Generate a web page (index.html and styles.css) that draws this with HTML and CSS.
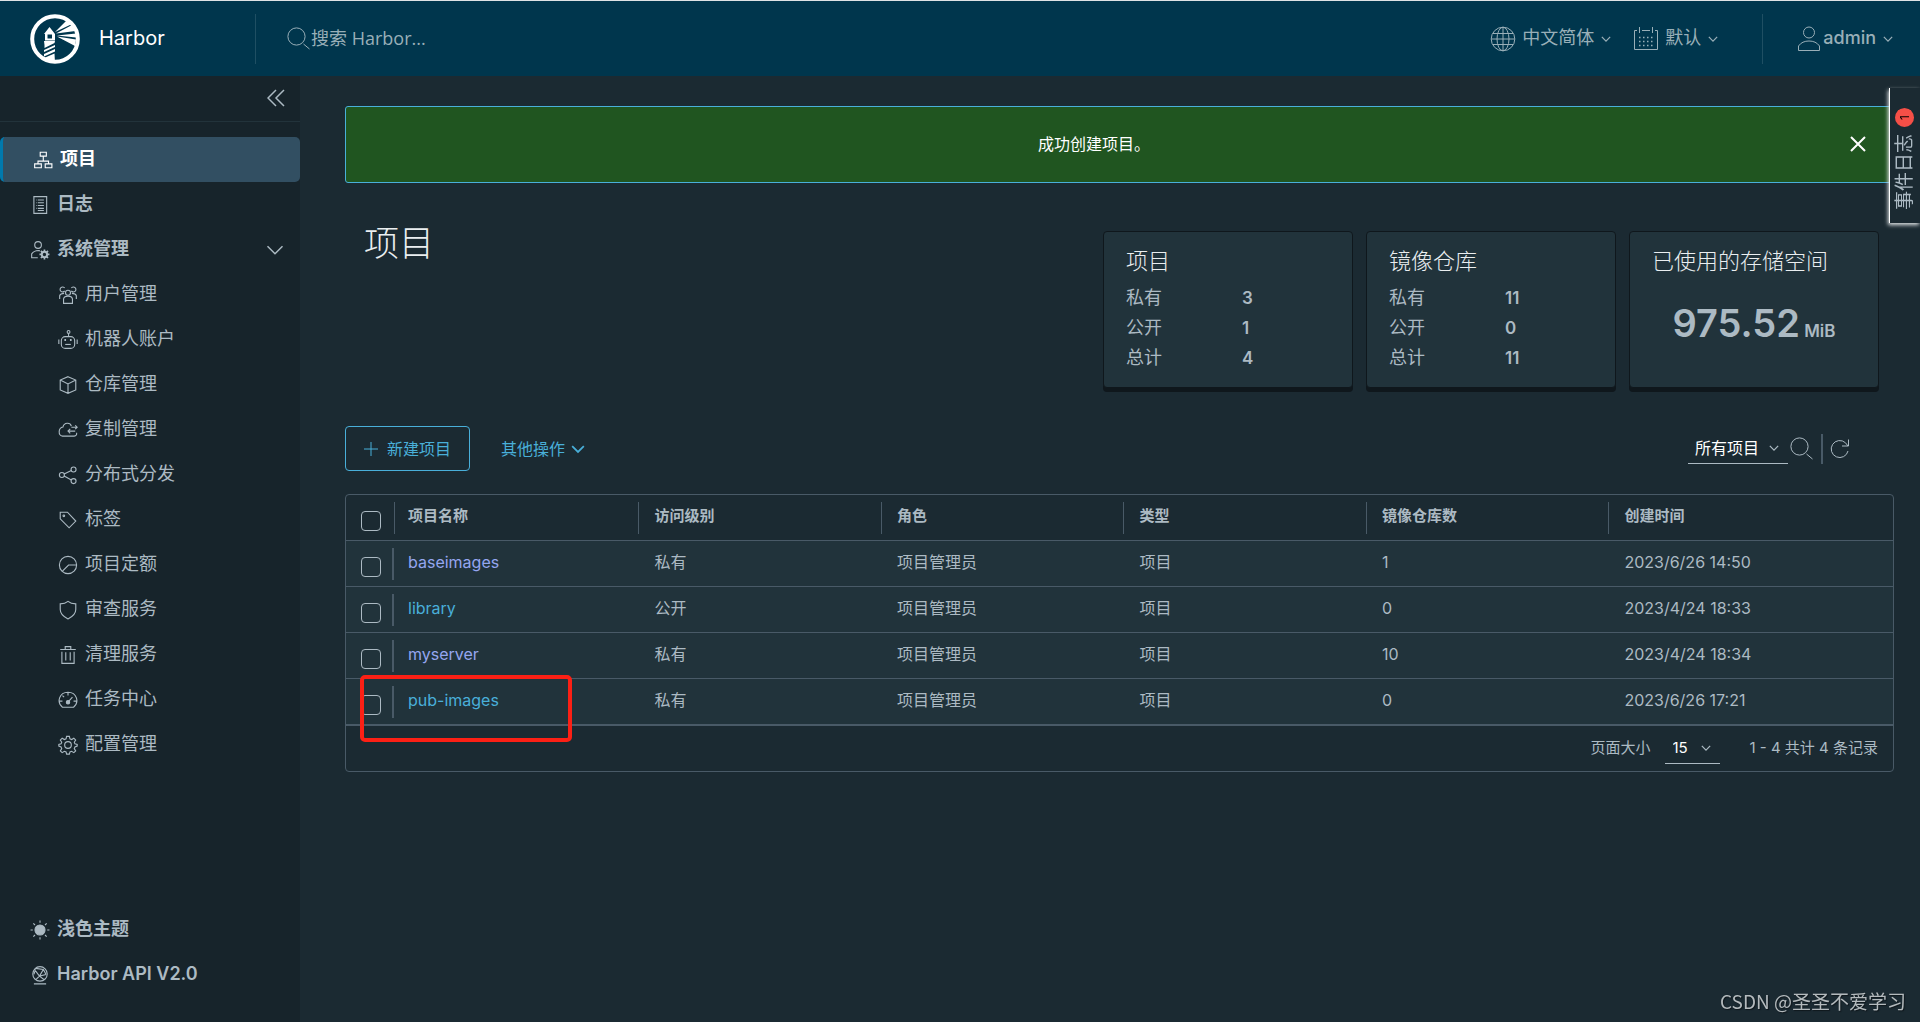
FILE: index.html
```html
<!DOCTYPE html>
<html lang="zh-CN">
<head>
<meta charset="utf-8">
<meta name="viewport" content="width=device-width, initial-scale=1">
<title>Harbor</title>
<link rel="stylesheet" href="styles.css">
</head>
<body>
<svg class="sprite" aria-hidden="true">
  <symbol id="i-chevron" viewBox="0 0 24 24"><path d="M2 7l10 10L22 7"/></symbol>
  <symbol id="i-search" viewBox="0 0 24 24"><circle cx="9.500" cy="9.500" r="8.600"/><path d="M16.500 17l6 5"/></symbol>
  <symbol id="i-globe" viewBox="0 0 26 26"><circle cx="13" cy="13" r="11.800"/><ellipse cx="13" cy="13" rx="6" ry="11.800"/><path d="M13 1v24M1.500 13h23M3 7.500h20M3 18.500h20"/></symbol>
  <symbol id="i-calendar" viewBox="0 0 26 26"><path d="M4 4.500H1.500v19h23v-19H22M9 4.500h8M6.500 1v6M19.500 1v6"/><path stroke-dasharray="1.500 2.500" stroke-width="1.500" d="M6 11.500h15M6 15.500h15M6 19.500h15"/></symbol>
  <symbol id="i-user" viewBox="0 0 24 26"><circle cx="12" cy="6.500" r="5.500"/><path d="M1.500 24.500v-4.500c2.500-3.500 6-5 10.500-5s8 1.500 10.500 5v4.500z"/></symbol>
  <symbol id="i-collapse" viewBox="0 0 36 36"><path d="M18 2L2 18l16 16M34 2L18 18l16 16"/></symbol>
  <symbol id="i-projects" viewBox="0 0 36 36"><path d="M13 4h11v7H13zM3 25h12v7H3zM22 25h12v7H22zM18.500 11v7M9 25v-5h19v5M18.500 18v2"/></symbol>
  <symbol id="i-logs" viewBox="0 0 36 36"><path d="M7 3h23v30H7zM14 9h11M14 14h11M14 19h11M14 24h11M14 28h11M11 9h1M11 14h1M11 19h1M11 24h1"/></symbol>
  <symbol id="i-admin" viewBox="0 0 36 36"><circle cx="14.500" cy="9" r="6"/><path d="M14 32H3v-7c3-4 7-6 12-6l3 .5"/><circle cx="26" cy="26" r="4.800" stroke-width="3.500"/><path stroke-width="3" d="M26 17v4M26 31v4M17 26h4M31 26h4M19.600 19.600l3 3M29.400 29.400l3 3M32.400 19.600l-3 3M22.600 29.400l-3 3"/></symbol>
  <symbol id="i-users" viewBox="0 0 36 36"><circle cx="18" cy="14" r="4.500"/><path d="M10 33v-8c1-4 4-5 8-5s7 1 8 5v8z"/><path d="M12 10.500a4.500 4.500 0 1 1 0-5M24 10.500a4.500 4.500 0 1 0 0-5M3 25v-6c1-3 4-4 8-4M33 25v-6c-1-3-4-4-8-4"/></symbol>
  <symbol id="i-robot" viewBox="0 0 36 36"><rect x="6" y="12" width="24" height="21" rx="7"/><circle cx="19" cy="3.500" r="2.500"/><path d="M19 6v6M1.500 17v8M34.500 17v8"/><path stroke-width="3" d="M13 16v4M23 16v4"/><path d="M13 26h10"/></symbol>
  <symbol id="i-box" viewBox="0 0 36 36"><path d="M18 3l14 6v18l-14 6-14-6V9zM4 9l14 7 14-7M18 16v17"/></symbol>
  <symbol id="i-cloud" viewBox="0 0 36 36"><path d="M24 11C22 4 11 4 9 12.500 0 14 0 28 8 29h21c4-.5 5-3 4.500-6M24 13h10M31 9.500l3.500 3.500-3.500 3.500M31 20H18M22 16l-4 4 4 4"/></symbol>
  <symbol id="i-share" viewBox="0 0 36 36"><circle cx="7" cy="18" r="4.500"/><circle cx="28" cy="8" r="4.500"/><circle cx="28" cy="29" r="4.500"/><path d="M11 16l13-6M11 20l13 7"/></symbol>
  <symbol id="i-tag" viewBox="0 0 36 36"><path d="M4 4h13l15 16-12 12L4 16z"/><circle cx="10.500" cy="10.500" r="1.500"/></symbol>
  <symbol id="i-quota" viewBox="0 0 36 36"><circle cx="18" cy="18" r="15.500"/><path d="M33 18H19L8 29"/></symbol>
  <symbol id="i-shield" viewBox="0 0 36 36"><path d="M18 2.500c4 3.500 9 4.500 14 4.500v10c0 8-6 13-14 17C10 30 4 25 4 17V7c5 0 10-1 14-4.500z"/></symbol>
  <symbol id="i-trash" viewBox="0 0 36 36"><path d="M4 8h28M7 12v21h22V12M13 8V3h10v5M14 13v15M22 13v15"/></symbol>
  <symbol id="i-gauge" viewBox="0 0 36 36"><path d="M8 31C-3 22 2 4 18 4s21 18 10 27zM18 5v5M3 20h5M28 20h5M8 10l3 3"/><circle cx="18" cy="22" r="3" fill="currentColor"/><path d="M18 22l8-9"/></symbol>
  <symbol id="i-gear" viewBox="0 0 36 36"><circle cx="18" cy="18" r="6"/><path d="M15.500 2.500h5l1 4.500 3 1.200 4-2.500 3.300 3.300-2.500 4 1.200 3 4 1v3l-4 1.500-1.200 3 2.500 4-3.300 3.300-4-2.500-3 1.200-1 4h-5l-1-4-3-1.200-4 2.500-3.300-3.300 2.500-4-1.200-3-4-1.500v-3l4-1 1.200-3-2.500-4 3.300-3.300 4 2.500 3-1.200z"/></symbol>
  <symbol id="i-sun" viewBox="0 0 36 36"><circle cx="18" cy="18" r="9" fill="currentColor"/><path d="M18 1v4M18 31v4M1 18h4M31 18h4M6 6l3 3M27 27l3 3M30 6l-3 3M9 27l-3 3"/></symbol>
  <symbol id="i-api" viewBox="0 0 36 36"><circle cx="18" cy="16" r="13"/><path d="M8 8l9 12 12-3M17 20l-6 6M17 20l8 6M10 6l14 2 5 9M7 17l3-9M24 8l-7 12M7 34h22"/></symbol>
  <symbol id="i-plus" viewBox="0 0 14 14"><path d="M7 0v14M0 7h14"/></symbol>
  <symbol id="i-close" viewBox="0 0 16 16"><path d="M1 1l14 14M15 1L1 15"/></symbol>
  <symbol id="i-refresh" viewBox="0 0 20 22"><path d="M18 13a8.500 8.500 0 1 1-2.500-8.200L18 8M18.500 1.500V8H12"/></symbol>
</svg>

<header class="header">
  <a class="brand" href="#">
    <svg class="logo" viewBox="0 0 50 50" aria-hidden="true">
      <circle class="logo-ring" cx="25" cy="25" r="22.800"/>
      <path d="M14 20l5.500-7 5.500 7v6.500H15V20zM14 27h11l-.5 2-10 5v-3zM14 36l11-5v2l-11 5zM14 40l11-5v2.500l-11 5zM14 44l10.500-4.500L25 49l-11-3zM25 18L37 6l5 4zM26 19.500L42 11l3.500 6zM27 21.500L46 19.500v4zM27 22.500L46 25.500 45 32z"/>
      <path class="logo-window" d="M17.500 20.500h4.500v4h-4.500z"/>
    </svg>
    <span>Harbor</span>
  </a>
  <label class="search">
    <svg class="icon search-icon" aria-hidden="true"><use href="#i-search"/></svg>
    <input type="search" placeholder="搜索 Harbor..." aria-label="搜索 Harbor">
  </label>
  <div class="header-actions">
    <button type="button" class="menu"><svg class="icon menu-icon"><use href="#i-globe"/></svg><span>中文简体</span><svg class="icon caret"><use href="#i-chevron"/></svg></button>
    <button type="button" class="menu"><svg class="icon menu-icon"><use href="#i-calendar"/></svg><span>默认</span><svg class="icon caret"><use href="#i-chevron"/></svg></button>
  </div>
  <div class="account">
    <button type="button" class="menu menu-user"><svg class="icon menu-icon"><use href="#i-user"/></svg><span>admin</span><svg class="icon caret"><use href="#i-chevron"/></svg></button>
  </div>
</header>

<div class="layout">
  <aside class="sidebar">
    <div class="sidebar-top"><button type="button" class="collapse" aria-label="收起"><svg class="icon"><use href="#i-collapse"/></svg></button></div>
    <nav class="nav">
      <a class="nav-item active" href="#"><svg class="icon"><use href="#i-projects"/></svg><span>项目</span></a>
      <a class="nav-item" href="#"><svg class="icon"><use href="#i-logs"/></svg><span>日志</span></a>
      <button type="button" class="nav-item"><svg class="icon"><use href="#i-admin"/></svg><span>系统管理</span><svg class="icon group-caret"><use href="#i-chevron"/></svg></button>
      <a class="nav-item sub" href="#"><svg class="icon"><use href="#i-users"/></svg><span>用户管理</span></a>
      <a class="nav-item sub" href="#"><svg class="icon"><use href="#i-robot"/></svg><span>机器人账户</span></a>
      <a class="nav-item sub" href="#"><svg class="icon"><use href="#i-box"/></svg><span>仓库管理</span></a>
      <a class="nav-item sub" href="#"><svg class="icon"><use href="#i-cloud"/></svg><span>复制管理</span></a>
      <a class="nav-item sub" href="#"><svg class="icon"><use href="#i-share"/></svg><span>分布式分发</span></a>
      <a class="nav-item sub" href="#"><svg class="icon"><use href="#i-tag"/></svg><span>标签</span></a>
      <a class="nav-item sub" href="#"><svg class="icon"><use href="#i-quota"/></svg><span>项目定额</span></a>
      <a class="nav-item sub" href="#"><svg class="icon"><use href="#i-shield"/></svg><span>审查服务</span></a>
      <a class="nav-item sub" href="#"><svg class="icon"><use href="#i-trash"/></svg><span>清理服务</span></a>
      <a class="nav-item sub" href="#"><svg class="icon"><use href="#i-gauge"/></svg><span>任务中心</span></a>
      <a class="nav-item sub" href="#"><svg class="icon"><use href="#i-gear"/></svg><span>配置管理</span></a>
    </nav>
    <div class="nav nav-bottom">
      <button type="button" class="nav-item"><svg class="icon"><use href="#i-sun"/></svg><span>浅色主题</span></button>
      <a class="nav-item" href="#"><svg class="icon"><use href="#i-api"/></svg><span>Harbor API V2.0</span></a>
    </div>
  </aside>

  <main class="content">
    <div class="alert" role="status">
      <p>成功创建项目。</p>
      <button type="button" class="alert-close" aria-label="关闭"><svg class="icon"><use href="#i-close"/></svg></button>
    </div>

    <div class="summary">
      <h1>项目</h1>
      <div class="cards">
        <section class="card">
          <h2>项目</h2>
          <dl><dt>私有</dt><dd>3</dd><dt>公开</dt><dd>1</dd><dt>总计</dt><dd>4</dd></dl>
        </section>
        <section class="card">
          <h2>镜像仓库</h2>
          <dl><dt>私有</dt><dd>11</dd><dt>公开</dt><dd>0</dd><dt>总计</dt><dd>11</dd></dl>
        </section>
        <section class="card">
          <h2>已使用的存储空间</h2>
          <p class="storage"><strong>975.52</strong> <span>MiB</span></p>
        </section>
      </div>
    </div>

    <div class="toolbar">
      <button type="button" class="btn btn-outline"><svg class="icon"><use href="#i-plus"/></svg><span>新建项目</span></button>
      <button type="button" class="btn btn-link"><span>其他操作</span><svg class="icon"><use href="#i-chevron"/></svg></button>
      <div class="filters">
        <span class="select select-filter">
          <select aria-label="项目筛选"><option>所有项目</option></select>
          <svg class="icon caret"><use href="#i-chevron"/></svg>
        </span>
        <button type="button" class="tool" aria-label="搜索"><svg class="icon search-icon"><use href="#i-search"/></svg></button>
        <button type="button" class="tool tool-refresh" aria-label="刷新"><svg class="icon"><use href="#i-refresh"/></svg></button>
      </div>
    </div>

    <div class="datagrid">
      <table>
        <colgroup><col class="col-check"><col><col><col><col><col><col><col class="col-end"></colgroup>
        <thead>
          <tr><th scope="col"><input type="checkbox" aria-label="全选"></th><th scope="col">项目名称</th><th scope="col">访问级别</th><th scope="col">角色</th><th scope="col">类型</th><th scope="col">镜像仓库数</th><th scope="col" colspan="2">创建时间</th></tr>
        </thead>
        <tbody>
          <tr><td><input type="checkbox" aria-label="baseimages"></td><td><a class="visited" href="#">baseimages</a></td><td>私有</td><td>项目管理员</td><td>项目</td><td>1</td><td colspan="2">2023/6/26 14:50</td></tr>
          <tr><td><input type="checkbox" aria-label="library"></td><td><a href="#">library</a></td><td>公开</td><td>项目管理员</td><td>项目</td><td>0</td><td colspan="2">2023/4/24 18:33</td></tr>
          <tr><td><input type="checkbox" aria-label="myserver"></td><td><a class="visited" href="#">myserver</a></td><td>私有</td><td>项目管理员</td><td>项目</td><td>10</td><td colspan="2">2023/4/24 18:34</td></tr>
          <tr><td><input type="checkbox" aria-label="pub-images"></td><td><a href="#">pub-images</a></td><td>私有</td><td>项目管理员</td><td>项目</td><td>0</td><td colspan="2">2023/6/26 17:21</td></tr>
        </tbody>
      </table>
      <div class="pager">
        <label for="page-size">页面大小</label>
        <span class="select select-size">
          <select id="page-size"><option>15</option></select>
          <svg class="icon caret"><use href="#i-chevron"/></svg>
        </span>
        <span>1 - 4 共计 4 条记录</span>
      </div>
      <div class="highlight"></div>
    </div>
  </main>
</div>

<button type="button" class="event-tab"><span>事件日志</span><span class="badge">1</span></button>
<div class="watermark">CSDN @圣圣不爱学习</div>
</body>
</html>
```
FILE: styles.css
```css
* {
  box-sizing: border-box;
}

body {
  margin: 0;
  min-height: 100vh;
  display: flex;
  flex-direction: column;
  background: #1b2a32;
  color: #acbac3;
  font-family: Inter, "Noto Sans CJK SC", sans-serif;
  font-size: 16px;
  line-height: 24px;
}

button,
input,
select {
  font: inherit;
  color: inherit;
  background: none;
  border: 0;
  margin: 0;
  padding: 0;
}

a {
  color: inherit;
  text-decoration: none;
}

h1,
h2,
p,
dl,
dd {
  margin: 0;
}

.sprite {
  position: absolute;
  width: 0;
  height: 0;
}

.icon {
  display: block;
  flex: none;
  width: 20px;
  height: 20px;
  fill: none;
  stroke: currentColor;
  stroke-width: 2;
}

/* Header */
.header {
  display: flex;
  align-items: center;
  height: 76px;
  border-top: 1px solid #dfe3e5;
  background: #00364d;
  color: #99afb8;
  font-size: 18px;
}

.brand {
  display: flex;
  align-items: center;
  gap: 19px;
  width: 256px;
  height: 50px;
  padding-left: 30px;
  border-right: 1px solid #1f4f63;
  color: #fff;
  font-size: 20px;
}

.brand span,
.menu span {
  padding-bottom: 2px;
}

.logo {
  width: 50px;
  height: 50px;
  fill: #fff;
}

.logo-ring {
  fill: none;
  stroke: #fff;
  stroke-width: 4;
}

.logo-window {
  fill: #00364d;
}

.search {
  flex: 1;
  display: flex;
  align-items: center;
  padding-left: 31px;
}

.search-icon {
  width: 24px;
  height: 24px;
  stroke-width: 1;
}

.search input {
  flex: 1;
  outline: 0;
  padding-bottom: 2px;
  font-family: "Open Sans", "Noto Sans CJK SC", sans-serif;
}

.search input::placeholder {
  color: #99afb8;
  opacity: 1;
}

.header-actions {
  display: flex;
  gap: 22px;
  padding-right: 44px;
}

.account {
  display: flex;
  align-items: center;
  height: 50px;
  padding: 0 27px 0 34px;
  border-left: 1px solid #1f4f63;
}

.menu {
  display: flex;
  align-items: center;
}

.menu-icon {
  width: 26px;
  height: 26px;
  margin-right: 6px;
  stroke-width: 1;
}

.menu-user .menu-icon {
  width: 24px;
  margin-right: 2px;
}

.menu-user {
  font-weight: 500;
}

.caret {
  width: 10px;
  height: 10px;
  stroke-width: 3;
}

.menu .caret {
  margin-left: 7px;
}

/* Sidebar */
.layout {
  flex: 1;
  display: flex;
}

.sidebar {
  flex: none;
  display: flex;
  flex-direction: column;
  width: 300px;
  padding-bottom: 25px;
  background: #17242b;
  font-size: 18px;
}

.sidebar-top {
  display: flex;
  justify-content: flex-end;
  padding: 13px 15px 14px;
  margin-bottom: 15px;
  border-bottom: 1px solid #22333b;
}

.collapse .icon {
  width: 18px;
  height: 18px;
  stroke-width: 3;
}

.nav {
  display: flex;
  flex-direction: column;
}

.nav-bottom {
  margin-top: auto;
}

.nav-item {
  display: flex;
  align-items: center;
  gap: 7px;
  height: 45px;
  padding: 0 16px 0 30px;
  font-weight: 700;
  text-align: left;
}

.nav-item span {
  padding-bottom: 2px;
}

.nav-bottom .nav-item {
  font-weight: 600;
}

.nav-item.active {
  border-left: 3px solid #0079ad;
  border-radius: 5px;
  background: #324f62;
  color: #fff;
}

.nav-item.sub {
  padding-left: 58px;
  font-weight: 400;
}

.group-caret {
  width: 18px;
  height: 18px;
  margin-left: auto;
}

/* Notification */
.content {
  flex: 1;
  min-width: 0;
  padding: 30px 26px 30px 45px;
}

.alert {
  display: flex;
  align-items: center;
  min-height: 77px;
  padding-right: 27px;
  border: 1px solid #49afd9;
  border-radius: 3px;
  background: #205520;
  color: #fff;
}

.alert p {
  flex: 1;
  padding: 0 8px 2px 0;
  text-align: center;
}

.alert-close {
  padding-bottom: 2px;
}

.alert-close .icon {
  width: 16px;
  height: 16px;
}

/* Title and statistics */
.summary {
  display: flex;
  justify-content: space-between;
  align-items: flex-start;
  margin: 36px 15px 38px 19px;
}

h1 {
  color: #eaeef0;
  font-size: 35px;
  font-weight: 300;
  line-height: 48px;
}

.cards {
  display: flex;
  gap: 13px;
  padding-top: 12px;
}

.card {
  width: 250px;
  padding: 14px 22px;
  border: 1px solid #0f171c;
  border-radius: 4px;
  background: #21333b;
  box-shadow: 0 4px 0 #0f171c;
}

h2 {
  margin-bottom: 7px;
  color: #eaeef0;
  font-size: 22px;
  font-weight: 300;
  line-height: 30px;
  white-space: nowrap;
}

.card dl {
  display: grid;
  grid-template-columns: 116px 1fr;
  font-size: 18px;
  line-height: 30px;
}

.card dd {
  font-size: 17px;
  font-weight: 600;
}

.storage {
  padding-top: 16px;
  font-size: 17px;
  font-weight: 600;
  line-height: 48px;
  text-align: center;
}

.storage strong {
  font-size: 38px;
  font-weight: 600;
}

/* Toolbar */
.toolbar {
  display: flex;
  align-items: center;
  gap: 31px;
  margin-bottom: 23px;
}

.btn {
  display: flex;
  align-items: center;
  height: 45px;
  color: #49afd9;
}

.btn .icon {
  width: 14px;
  height: 14px;
}

.btn-outline {
  gap: 9px;
  padding: 0 18px;
  border: 1px solid #49afd9;
  border-radius: 4px;
}

.btn-outline .icon {
  stroke-width: 1;
}

.btn-link {
  gap: 6px;
}

.btn-link .icon {
  stroke-width: 3;
}

.filters {
  display: flex;
  align-items: center;
  margin-left: auto;
  padding-right: 44px;
}

.select {
  display: flex;
  align-items: center;
  border-bottom: 1px solid #acbac3;
}

.select select {
  appearance: none;
  flex: 1;
  min-width: 0;
  color: #fff;
}

.select option {
  color: #1b2a32;
}

.select-filter {
  width: 100px;
  height: 30px;
  padding: 0 9px 0 7px;
}

.tool {
  padding: 3px 7px 3px 2px;
}

.tool-refresh {
  padding: 4px 0 4px 7px;
  border-left: 2px solid #495a67;
}

.tool-refresh .icon {
  height: 22px;
  stroke-width: 1;
}

/* Data grid */
.datagrid {
  position: relative;
  border: 1px solid #495a67;
  border-radius: 4px;
}

table {
  width: 100%;
  table-layout: fixed;
  border-collapse: collapse;
}

.col-check {
  width: 52px;
}

.col-end {
  width: 40px;
}

th,
td {
  position: relative;
  height: 46px;
  padding: 0 0 2px 14px;
  border-bottom: 1px solid #495a67;
  text-align: left;
  white-space: nowrap;
}

th {
  height: 45px;
  font-size: 15px;
  font-weight: 600;
}

th:nth-child(2),
td:nth-child(2) {
  padding-left: 10px;
}

th + th::before,
td:nth-child(2)::before {
  content: "";
  position: absolute;
  top: 7px;
  left: -2px;
  width: 1px;
  height: 32px;
  background: #495a67;
}

th:nth-child(2)::before {
  left: -4px;
}

td:nth-child(2)::before {
  left: -6px;
  width: 2px;
}

tbody tr {
  background: #21333b;
}

td a {
  color: #49afd9;
}

td a.visited {
  color: #95a6ef;
}

input[type="checkbox"] {
  appearance: none;
  display: block;
  width: 20px;
  height: 20px;
  margin: 10px 0 0 1px;
  border: 1px solid #acbac3;
  border-radius: 4px;
}

.pager {
  display: flex;
  align-items: center;
  justify-content: flex-end;
  height: 46px;
  padding-right: 15px;
  border-top: 1px solid #495a67;
  font-size: 15px;
}

.select-size {
  width: 55px;
  height: 32px;
  margin: 0 30px 0 14px;
  padding: 0 9px 0 8px;
}

.highlight {
  position: absolute;
  top: 180px;
  left: 14px;
  width: 212px;
  height: 67px;
  border: 4px solid #fc2015;
  border-radius: 5px;
}

/* Overlays */
.event-tab {
  position: fixed;
  top: 88px;
  right: 0;
  display: flex;
  align-items: center;
  gap: 7px;
  width: 31px;
  height: 135px;
  padding: 13px 0;
  border-right: 1px solid #fff;
  background: #1b2a32;
  box-shadow: 1px -2px 4px #dfe3e5;
  font-size: 19px;
  line-height: 28px;
  writing-mode: vertical-rl;
  text-orientation: sideways;
  transform: rotate(180deg);
}

.badge {
  width: 19px;
  height: 19px;
  border-radius: 50%;
  background: #f54f47;
  color: #000;
  font-size: 12px;
  line-height: 19px;
  text-align: center;
}

.watermark {
  position: fixed;
  right: 14px;
  bottom: 7px;
  color: #b4babd;
  font-family: "Noto Sans CJK SC", sans-serif;
  font-size: 19px;
  line-height: 28px;
  text-shadow: 1px 1px 1px #0f171c;
}
```
